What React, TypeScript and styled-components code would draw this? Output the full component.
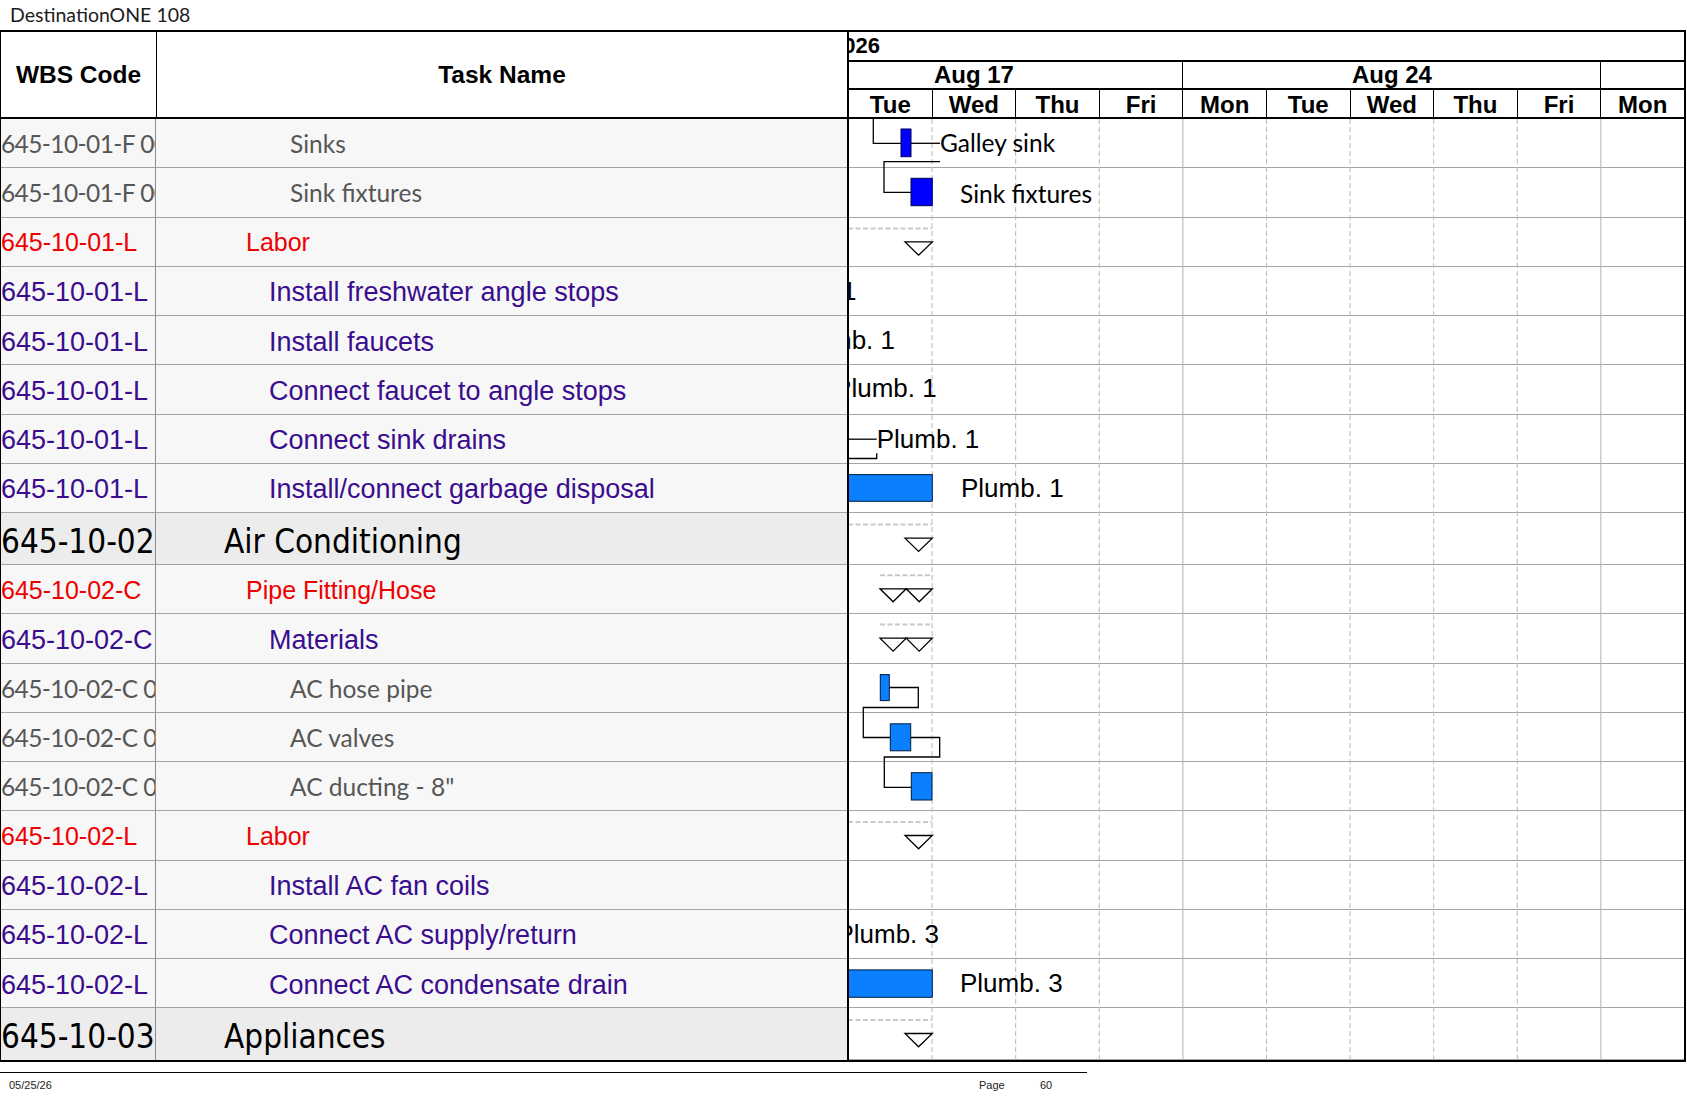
import React from "react";
import styled, { createGlobalStyle, css } from "styled-components";

// largeur d'une colonne jour dans le diagramme
const DAY = 83.6;

type Kind = "item" | "group" | "task" | "head";

interface Row {
  wbs: string;
  name: string;
  kind: Kind;
}

const rows: Row[] = [
  { wbs: "645-10-01-F 001", name: "Sinks", kind: "item" },
  { wbs: "645-10-01-F 002", name: "Sink fixtures", kind: "item" },
  { wbs: "645-10-01-L", name: "Labor", kind: "group" },
  { wbs: "645-10-01-L", name: "Install freshwater angle stops", kind: "task" },
  { wbs: "645-10-01-L", name: "Install faucets", kind: "task" },
  { wbs: "645-10-01-L", name: "Connect faucet to angle stops", kind: "task" },
  { wbs: "645-10-01-L", name: "Connect sink drains", kind: "task" },
  { wbs: "645-10-01-L", name: "Install/connect garbage disposal", kind: "task" },
  { wbs: "645-10-02", name: "Air Conditioning", kind: "head" },
  { wbs: "645-10-02-C", name: "Pipe Fitting/Hose", kind: "group" },
  { wbs: "645-10-02-C", name: "Materials", kind: "task" },
  { wbs: "645-10-02-C 001", name: "AC hose pipe", kind: "item" },
  { wbs: "645-10-02-C 002", name: "AC valves", kind: "item" },
  { wbs: "645-10-02-C 003", name: 'AC ducting - 8"', kind: "item" },
  { wbs: "645-10-02-L", name: "Labor", kind: "group" },
  { wbs: "645-10-02-L", name: "Install AC fan coils", kind: "task" },
  { wbs: "645-10-02-L", name: "Connect AC supply/return", kind: "task" },
  { wbs: "645-10-02-L", name: "Connect AC condensate drain", kind: "task" },
  { wbs: "645-10-03", name: "Appliances", kind: "head" },
];

const weeks = ["Aug 17", "Aug 24", "Aug 31"];
const days = ["Tue", "Wed", "Thu", "Fri", "Mon", "Tue", "Wed", "Thu", "Fri", "Mon"];

const rowHeight = (k: Kind) => (k === "head" ? 52 : 49.25);

// police, couleur, retrait et décalage vertical par niveau
const kindStyle: Record<Kind, { font: string; size: number; color: string; indent: number; shift: number }> = {
  item: { font: 'Lato, "Open Sans", sans-serif', size: 24.5, color: "#565656", indent: 134, shift: 1 },
  group: { font: '"Liberation Sans", Arial, sans-serif', size: 25, color: "#ee0000", indent: 90, shift: 0.5 },
  task: { font: '"Liberation Sans", Arial, sans-serif', size: 27, color: "#3a0d8e", indent: 113, shift: 1.6 },
  head: { font: '"DejaVu Sans Condensed", "DejaVu Sans", sans-serif', size: 33, color: "#000", indent: 68, shift: 3 },
};

const GlobalStyle = createGlobalStyle`
  html, body {
    margin: 0;
    padding: 0;
    background: #fff;
  }
  body {
    font-family: "Liberation Sans", Arial, sans-serif;
  }
`;

const Page = styled.div`
  width: 1687px;
  height: 1097px;
  overflow: hidden;
  background: #fff;
`;

const DocTitle = styled.div`
  height: 30px;
  line-height: 30px;
  padding-left: 10px;
  font-family: Lato, "Open Sans", sans-serif;
  font-size: 19.5px;
  color: #1c1c1c;
`;

const Frame = styled.div`
  width: 1686px;
  display: flex;
  border-top: 2px solid #000;
  border-bottom: 2px solid #000;
`;

/* ---------- partie tableau ---------- */

const Grid = styled.div`
  width: 849px;
  flex: none;
  box-sizing: border-box;
  border-left: 1px solid #000;
  border-right: 2px solid #000;
`;

const GridHeader = styled.div`
  height: 87px;
  box-sizing: border-box;
  display: flex;
  border-bottom: 2px solid #000;
  background: #fff;
`;

const HeaderCell = styled.div<{ $width?: number }>`
  display: flex;
  align-items: center;
  justify-content: center;
  font-size: 24.5px;
  font-weight: 700;
  color: #000;
  ${({ $width }) =>
    $width
      ? css`
          width: ${$width}px;
          flex: none;
          border-right: 1px solid #000;
        `
      : css`
          flex: 1;
        `}
`;

const GridRow = styled.div<{ $kind: Kind }>`
  display: flex;
  height: ${({ $kind }) => rowHeight($kind)}px;
  box-sizing: border-box;
  border-bottom: 1px solid #a4a4a4;
  background: ${({ $kind }) => ($kind === "head" ? "#ececec" : "#f7f7f7")};
  font-family: ${({ $kind }) => kindStyle[$kind].font};
  font-size: ${({ $kind }) => kindStyle[$kind].size}px;
  color: ${({ $kind }) => kindStyle[$kind].color};
  &:last-child {
    border-bottom: none;
  }
`;

const CellText = styled.div<{ $kind: Kind }>`
  box-sizing: border-box;
  height: 100%;
  overflow: hidden;
  white-space: nowrap;
  line-height: ${({ $kind }) => rowHeight($kind) - ($kind === "head" ? 0 : 1)}px;
  padding-top: ${({ $kind }) => kindStyle[$kind].shift}px;
`;

const WbsCell = styled(CellText)`
  width: 155px;
  flex: none;
  border-right: 1px solid #8c8c8c;
  /* les codes en police étroite tiennent jusqu'au premier chiffre du suffixe */
  letter-spacing: ${({ $kind }) => ($kind === "item" ? "-0.6px" : "normal")};
`;

const NameCell = styled(CellText)`
  flex: 1;
  padding-left: ${({ $kind }) => kindStyle[$kind].indent}px;
`;

/* ---------- partie diagramme ---------- */

const Chart = styled.div`
  flex: 1;
  min-width: 0;
  overflow: hidden;
  box-sizing: border-box;
  border-right: 2px solid #000;
`;

const ChartHeader = styled.div`
  height: 87px;
  box-sizing: border-box;
  border-bottom: 2px solid #000;
  font-weight: 700;
  color: #000;
`;

const YearRow = styled.div`
  height: 30px;
  box-sizing: border-box;
  border-bottom: 2px solid #000;
  font-size: 22px;
  line-height: 28px;
  white-space: nowrap;
  text-indent: -18px;
`;

const WeekRow = styled.div`
  height: 28px;
  box-sizing: border-box;
  display: flex;
  margin-left: -${DAY}px;
  border-bottom: 2px solid #000;
`;

const WeekCell = styled.div`
  width: ${DAY * 5}px;
  flex: none;
  box-sizing: border-box;
  border-right: 1px solid #000;
  text-align: center;
  font-size: 24px;
  line-height: 26px;
`;

const DayRow = styled.div`
  height: 27px;
  display: flex;
`;

const DayCell = styled.div`
  width: ${DAY}px;
  flex: none;
  box-sizing: border-box;
  border-right: 1px solid #000;
  padding-top: 2px;
  text-align: center;
  font-size: 24px;
  line-height: 25px;
`;

const ChartBody = styled.div`
  position: relative;
  background: #fff;
`;

const ChartRow = styled.div<{ $kind: Kind }>`
  height: ${({ $kind }) => rowHeight($kind)}px;
  box-sizing: border-box;
  border-bottom: 1px solid #a4a4a4;
  &:last-child {
    border-bottom: none;
  }
`;

const Overlay = styled.svg`
  position: absolute;
  left: 0;
  top: 0;
  overflow: visible;
  pointer-events: none;
`;

const BarLabel = styled.span<{ $calibri?: boolean; $end?: boolean }>`
  position: absolute;
  white-space: nowrap;
  line-height: 1;
  color: #000;
  font-family: ${({ $calibri }) => ($calibri ? 'Lato, "Open Sans", sans-serif' : '"Liberation Sans", Arial, sans-serif')};
  font-size: ${({ $calibri }) => ($calibri ? 24.5 : 26)}px;
  transform: ${({ $end }) => ($end ? "translateX(-100%)" : "none")};
`;

/* ---------- pied de page ---------- */

const Footer = styled.div`
  margin-top: 10px;
  width: 1087px;
  display: flex;
  padding-top: 6px;
  border-top: 1px solid #000;
  font-size: 11px;
  color: #222;
`;

const FooterDate = styled.span`
  width: 979px;
  box-sizing: border-box;
  padding-left: 9px;
`;

const FooterPage = styled.span`
  width: 61px;
`;

// étiquettes des barres : x = début (ou fin si end), top = haut du texte
const labels: { text: string; x: number; top: number; calibri?: boolean; end?: boolean }[] = [
  { text: "Galley sink", x: 91, top: 11.5, calibri: true },
  { text: "Sink fixtures", x: 111, top: 62.6, calibri: true },
  { text: "Plumb. 1", x: 7.5, top: 159.2, end: true },
  { text: "Plumb. 1", x: 46, top: 207.5, end: true },
  { text: "Plumb. 1", x: 87.7, top: 255.9, end: true },
  { text: "Plumb. 1", x: 27.7, top: 307 },
  { text: "Plumb. 1", x: 112, top: 356 },
  { text: "Plumb. 3", x: 90, top: 801.8, end: true },
  { text: "Plumb. 3", x: 111, top: 851.2 },
];

const Summary: React.FC<{ y: number; from?: number; double?: boolean }> = ({ y, from = -1, double }) => {
  const top = y + 13.5;
  return (
    <g>
      <line x1={from} y1={y} x2={83} y2={y} stroke="#c9c9c9" strokeWidth={2} strokeDasharray="5 2.5" />
      {double ? (
        <>
          <polygon points={`31,${top} 57.2,${top} 44.1,${top + 13}`} fill="#fff" stroke="#000" strokeWidth={1.3} />
          <polygon points={`57.2,${top} 83.3,${top} 70.2,${top + 13}`} fill="#fff" stroke="#000" strokeWidth={1.3} />
        </>
      ) : (
        <polygon points={`56,${top} 83.3,${top} 69.6,${top + 13.3}`} fill="#fff" stroke="#000" strokeWidth={1.3} />
      )}
    </g>
  );
};

const App: React.FC = () => {
  const bodyHeight = rows.reduce((h, r) => h + rowHeight(r.kind), 0);
  const link = { fill: "none", stroke: "#000", strokeWidth: 1.3 };
  const blue = { fill: "#0000ff", stroke: "#00005a", strokeWidth: 1 };
  const azure = { fill: "#0a80ff", stroke: "#001a3d", strokeWidth: 1 };

  return (
    <Page>
      <GlobalStyle />
      <DocTitle>DestinationONE 108</DocTitle>
      <Frame>
        <Grid>
          <GridHeader>
            <HeaderCell $width={155}>WBS Code</HeaderCell>
            <HeaderCell>Task Name</HeaderCell>
          </GridHeader>
          {rows.map((r, i) => (
            <GridRow key={i} $kind={r.kind}>
              <WbsCell $kind={r.kind}>{r.wbs}</WbsCell>
              <NameCell $kind={r.kind}>{r.name}</NameCell>
            </GridRow>
          ))}
        </Grid>

        <Chart>
          <ChartHeader>
            <YearRow>2026</YearRow>
            <WeekRow>
              {weeks.map((w) => (
                <WeekCell key={w}>{w}</WeekCell>
              ))}
            </WeekRow>
            <DayRow>
              {days.map((d, i) => (
                <DayCell key={i}>{d}</DayCell>
              ))}
            </DayRow>
          </ChartHeader>

          <ChartBody>
            {rows.map((r, i) => (
              <ChartRow key={i} $kind={r.kind} />
            ))}

            <Overlay width={835} height={bodyHeight}>
              {/* quadrillage des jours : pointillé, trait plein aux semaines */}
              {Array.from({ length: 9 }, (_, k) => {
                const x = (k + 1) * DAY - 0.5;
                const week = k === 3 || k === 8;
                return (
                  <line
                    key={k}
                    x1={x}
                    y1={0}
                    x2={x}
                    y2={bodyHeight}
                    stroke={week ? "#b0b0b0" : "#b8b8b8"}
                    strokeWidth={1}
                    strokeDasharray={week ? undefined : "5 3"}
                  />
                );
              })}

              {/* Sinks */}
              <polyline points="24.3,0 24.3,24.3 52,24.3" {...link} />
              <rect x={52} y={10} width={10} height={27.7} {...blue} />
              <line x1={62} y1={24.3} x2={91} y2={24.3} {...link} />
              <polyline points="91,42.7 35,42.7 35,73.3 62,73.3" {...link} />
              <rect x={62} y={59.3} width={21.3} height={27.4} {...blue} />

              <Summary y={109.4} />

              <line x1={0} y1={320.2} x2={27.7} y2={320.2} {...link} />
              <polyline points="0,339.5 27.7,339.5 27.7,334.2" {...link} />
              <rect x={-2} y={355.6} width={85.3} height={26.7} {...azure} />

              <Summary y={405.6} />
              <Summary y={456.3} from={31} double />
              <Summary y={505.6} from={31} double />

              {/* AC */}
              <rect x={31.3} y={555.6} width={9} height={26} {...azure} />
              <polyline points="40.3,568.5 69.3,568.5 69.3,588.5 14.3,588.5 14.3,618.5 41.3,618.5" {...link} />
              <rect x={41.3} y={604.8} width={20.4} height={27} {...azure} />
              <polyline points="61.7,618.5 90.7,618.5 90.7,638 35.3,638 35.3,668.4 62.3,668.4" {...link} />
              <rect x={62.3} y={653.7} width={20.7} height={27.3} {...azure} />

              <Summary y={703} />
              <rect x={-2} y={850.9} width={85.3} height={27.4} {...azure} />
              <Summary y={901} />
            </Overlay>

            {labels.map((l, i) => (
              <BarLabel key={i} $calibri={l.calibri} $end={l.end} style={{ left: l.x, top: l.top }}>
                {l.text}
              </BarLabel>
            ))}
          </ChartBody>
        </Chart>
      </Frame>

      <Footer>
        <FooterDate>05/25/26</FooterDate>
        <FooterPage>Page</FooterPage>
        <span>60</span>
      </Footer>
    </Page>
  );
};

export default App;
